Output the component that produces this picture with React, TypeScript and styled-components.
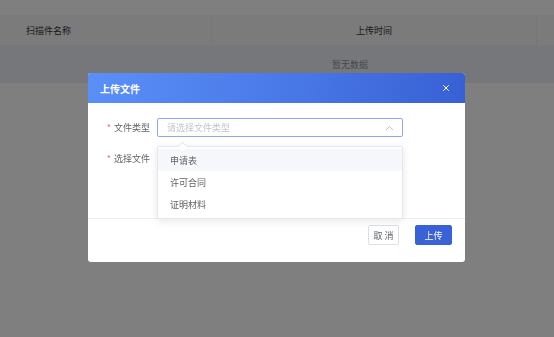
import styled, { createGlobalStyle } from 'styled-components';

const GlobalStyle = createGlobalStyle`
  html, body {
    margin: 0;
    padding: 0;
    width: 554px;
    height: 337px;
    overflow: hidden;
    background: #ffffff;
    font-family: "Noto Sans CJK SC", "Noto Sans", sans-serif;
    font-size: 9px;
    color: #303133;
  }
`;

// ---------------------------------------------------------------------------
// Page behind the dialog
// ---------------------------------------------------------------------------

const Page = styled.div`
  width: 554px;
  height: 337px;
  padding-top: 15px;
  box-sizing: border-box;
  overflow: hidden;
`;

const Table = styled.div`
  width: 700px;
`;

const HeaderRow = styled.div`
  display: grid;
  grid-template-columns: 212px 325px 1fr;
  height: 30px;
  background: #f6f6f7;
`;

const HeaderCell = styled.div<{ $center?: boolean }>`
  display: flex;
  align-items: center;
  justify-content: ${({ $center }) => ($center ? 'center' : 'flex-start')};
  padding-left: ${({ $center }) => ($center ? '0' : '26px')};
  border-right: 1px solid #ececee;
  color: #333333;
`;

const EmptyRow = styled.div`
  height: 38px;
  display: flex;
  align-items: center;
  justify-content: center;
  background: #eceef4;
  color: #909399;
`;

// ---------------------------------------------------------------------------
// Overlay + dialog
// ---------------------------------------------------------------------------

const Mask = styled.div`
  position: fixed;
  inset: 0;
  background: rgba(0, 0, 0, 0.5);
  display: flex;
  justify-content: flex-start;
  align-items: flex-start;
  padding: 73px 0 0 88px;
`;

const Dialog = styled.div`
  width: 377px;
  height: 189px;
  background: #ffffff;
  border-radius: 3px;
  display: flex;
  flex-direction: column;
  position: relative;
`;

const DialogHeader = styled.div`
  height: 30px;
  flex-shrink: 0;
  display: flex;
  align-items: center;
  justify-content: space-between;
  padding: 0 13px 0 12px;
  background: linear-gradient(100deg, #5a8ff8 0%, #4a7ae8 50%, #3760d4 100%);
  border-radius: 3px 3px 0 0;
`;

const DialogTitle = styled.span`
  color: #ffffff;
  font-size: 10px;
  font-weight: 700;
`;

const CloseButton = styled.button`
  border: none;
  background: none;
  padding: 0;
  width: 12px;
  height: 12px;
  display: flex;
  align-items: center;
  justify-content: center;
  cursor: pointer;
`;

const DialogBody = styled.div`
  flex: 1;
  padding: 15px 0 0 0;
  display: flex;
  flex-direction: column;
  gap: 12px;
  border-bottom: 1px solid #ebeef5;
`;

const FormRow = styled.div`
  display: flex;
  align-items: center;
  height: 19px;
`;

const Label = styled.label`
  width: 62px;
  padding-right: 7px;
  text-align: right;
  color: #606266;
  flex-shrink: 0;
`;

const Required = styled.span`
  color: #f56c6c;
  margin-right: 3px;
`;

const SelectWrap = styled.div`
  position: relative;
  width: 246px;
`;

const SelectBox = styled.div`
  height: 19px;
  box-sizing: border-box;
  border: 1px solid #8ea7ee;
  border-radius: 2px;
  display: flex;
  align-items: center;
  justify-content: space-between;
  padding: 0 8px 0 9px;
  color: #c0c4cc;
`;

const Dropdown = styled.div`
  position: absolute;
  top: 28px;
  left: 0;
  width: 246px;
  box-sizing: border-box;
  padding: 2px 0 3px;
  background: #ffffff;
  border: 1px solid #e4e7ed;
  border-radius: 2px;
  box-shadow: 0 2px 8px rgba(0, 0, 0, 0.1);
  z-index: 2;
`;

const Arrow = styled.div`
  position: absolute;
  top: -4px;
  left: 21px;
  width: 6px;
  height: 6px;
  background: #ffffff;
  border-left: 1px solid #e4e7ed;
  border-top: 1px solid #e4e7ed;
  transform: rotate(45deg);
`;

const Option = styled.div<{ $active?: boolean }>`
  height: 22px;
  display: flex;
  align-items: center;
  padding-left: 12px;
  color: #606266;
  background: ${({ $active }) => ($active ? '#f5f7fa' : 'transparent')};
`;

const Footer = styled.div`
  height: 43px;
  flex-shrink: 0;
  display: flex;
  justify-content: flex-end;
  align-items: flex-start;
  gap: 16px;
  padding: 6px 13px 0 0;
  box-sizing: border-box;
`;

const Button = styled.button<{ $primary?: boolean }>`
  height: 20px;
  padding: 0;
  width: ${({ $primary }) => ($primary ? '37px' : '31px')};
  border-radius: 2px;
  font-family: inherit;
  font-size: 9px;
  border: 1px solid ${({ $primary }) => ($primary ? '#3a62d7' : '#dcdfe6')};
  background: ${({ $primary }) => ($primary ? '#3a62d7' : '#ffffff')};
  color: ${({ $primary }) => ($primary ? '#ffffff' : '#606266')};
  cursor: pointer;
`;

const options = ['申请表', '许可合同', '证明材料'];

export default function App() {
  return (
    <>
      <GlobalStyle />
      <Page>
        <Table>
          <HeaderRow>
            <HeaderCell>扫描件名称</HeaderCell>
            <HeaderCell $center>上传时间</HeaderCell>
            <HeaderCell />
          </HeaderRow>
          <EmptyRow>暂无数据</EmptyRow>
        </Table>
      </Page>
      <Mask>
        <Dialog>
          <DialogHeader>
            <DialogTitle>上传文件</DialogTitle>
            <CloseButton aria-label='close'>
              <svg width='8' height='8' viewBox='0 0 8 8'>
                <path d='M1.2 1.2 L6.8 6.8 M6.8 1.2 L1.2 6.8' stroke='#ffffff' strokeWidth='1' />
              </svg>
            </CloseButton>
          </DialogHeader>
          <DialogBody>
            <FormRow>
              <Label>
                <Required>*</Required>文件类型
              </Label>
              <SelectWrap>
                <SelectBox>
                  <span>请选择文件类型</span>
                  <svg width='9' height='6' viewBox='0 0 9 6'>
                    <path d='M1 5 L4.5 1.5 L8 5' fill='none' stroke='#c0c4cc' strokeWidth='1' />
                  </svg>
                </SelectBox>
                <Dropdown>
                  <Arrow />
                  {options.map((o, i) => (
                    <Option key={o} $active={i === 0}>
                      {o}
                    </Option>
                  ))}
                </Dropdown>
              </SelectWrap>
            </FormRow>
            <FormRow>
              <Label>
                <Required>*</Required>选择文件
              </Label>
            </FormRow>
          </DialogBody>
          <Footer>
            <Button>取 消</Button>
            <Button $primary>上传</Button>
          </Footer>
        </Dialog>
      </Mask>
    </>
  );
}
